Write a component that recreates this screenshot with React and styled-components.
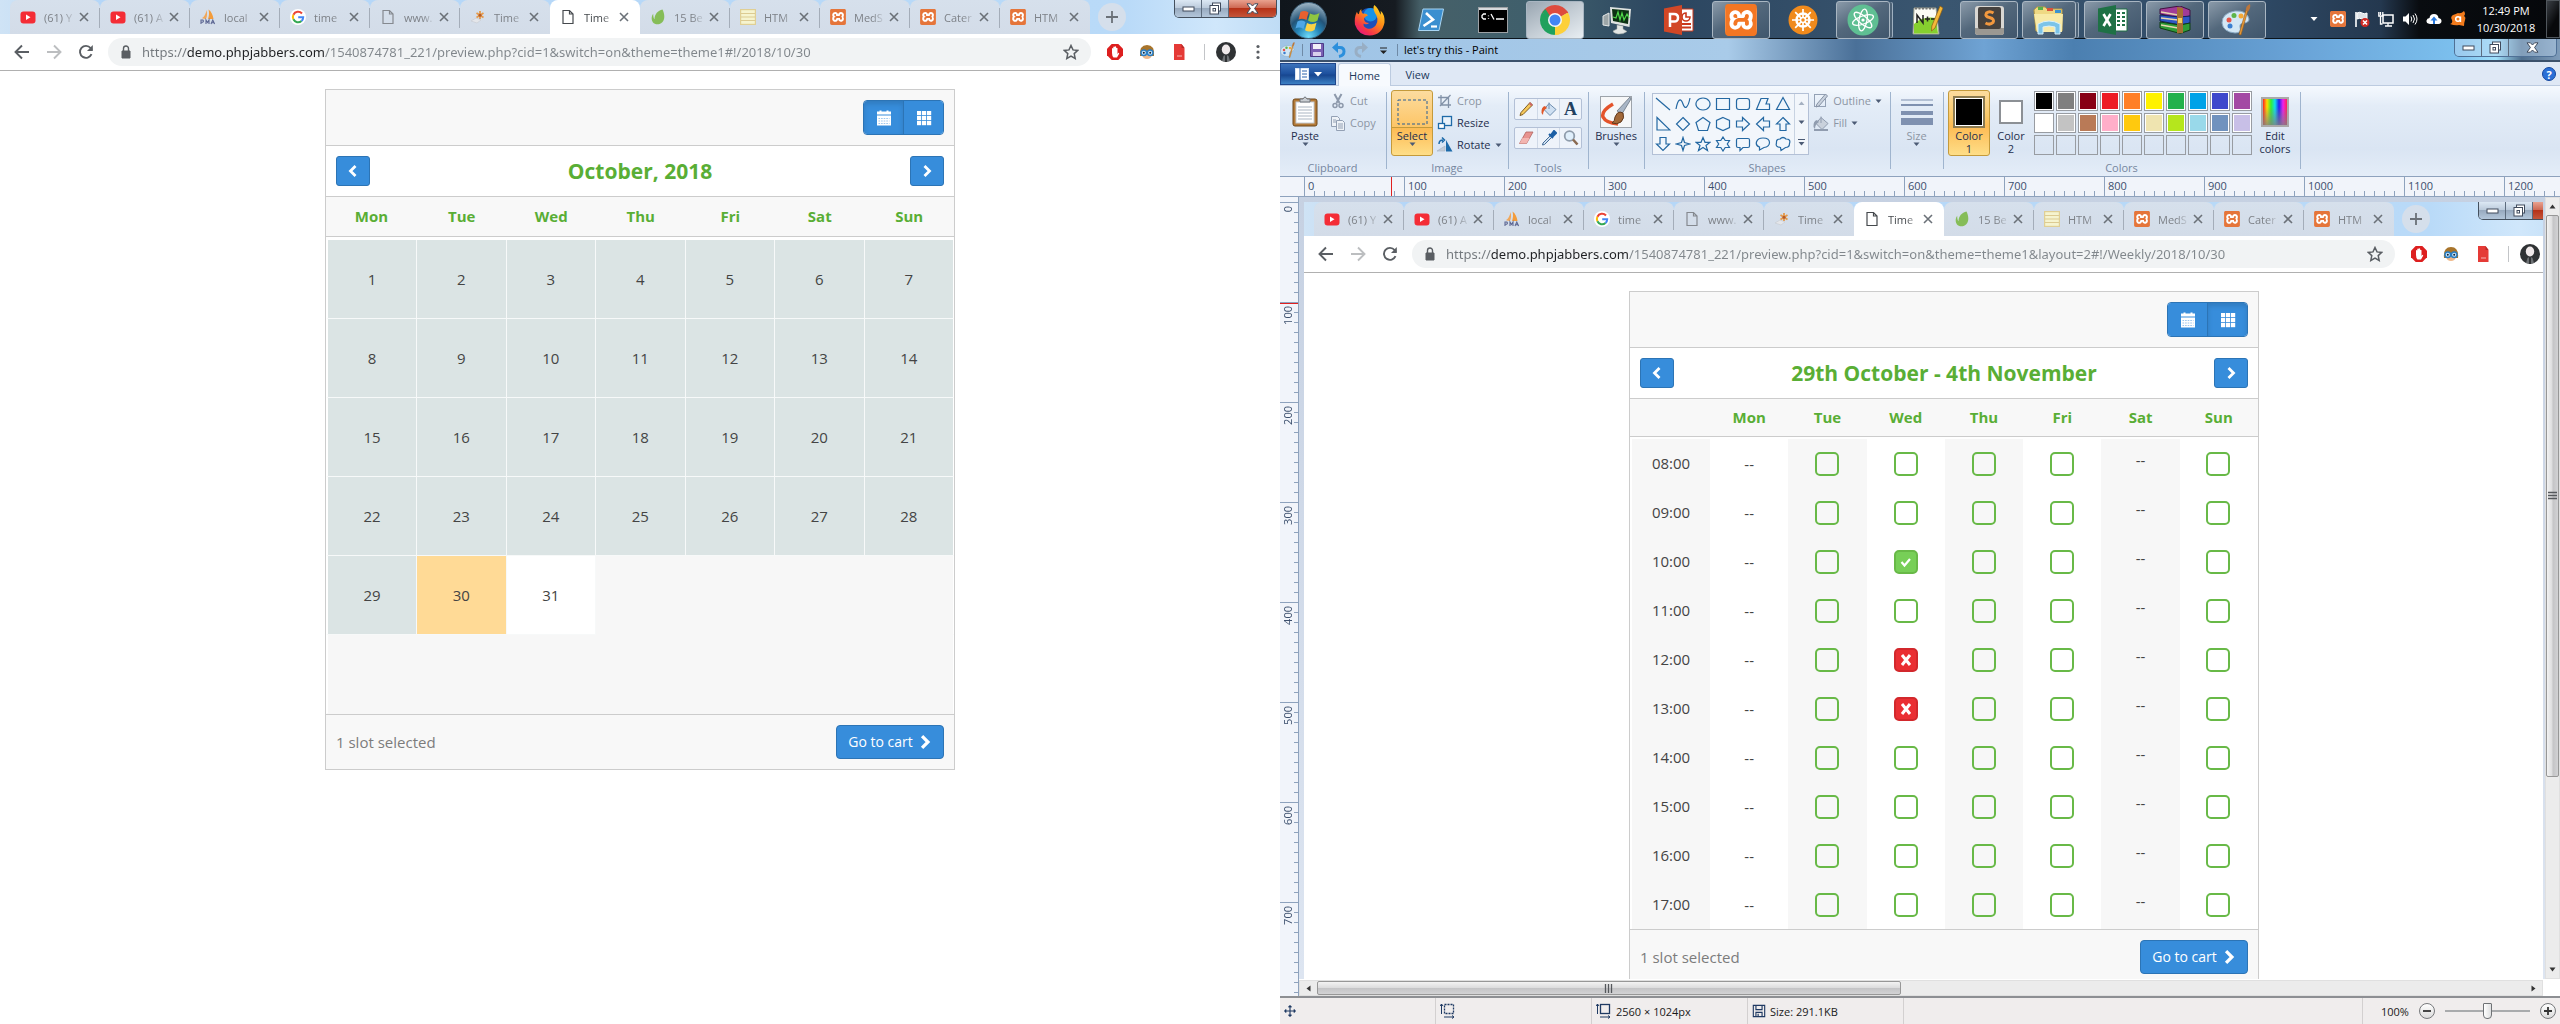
import React from 'react';
import styled, { createGlobalStyle, css } from 'styled-components';
import { SiXampp } from 'react-icons/si';

const Global = createGlobalStyle`
  *, *::before, *::after { box-sizing: border-box; }
  body { margin: 0; background: #fff; font-family: "Open Sans", "Noto Sans", sans-serif; font-size: 14px; color: #333; overflow: hidden; }
  button, input { font: inherit; color: inherit; margin: 0; }
  button { border: 0; padding: 0; background: none; cursor: pointer; }
  svg { display: block; flex: none; }
`;

const Desktop = styled.div`
  display: grid;
  grid-template-columns: minmax(0, 1fr) minmax(0, 1fr);
  height: 100vh;
`;

/* ---------- small shared pieces ---------- */

const Icon = ({ s = 16, w, h, vb = '0 0 16 16', children, ...rest }) => (
  <svg width={w || s} height={h || s} viewBox={vb} fill="none" aria-hidden="true" {...rest}>{children}</svg>
);

const Xampp = ({ s = 16 }) => (
  <XamppTile $s={s}><SiXampp size={s} /></XamppTile>
);
const XamppTile = styled.span`
  display: flex; align-items: center; justify-content: center; flex: none;
  width: ${p => p.$s}px; height: ${p => p.$s}px;
  background: #fff; border-radius: ${p => (p.$s > 20 ? 7 : 4)}px; color: ${p => (p.$s > 20 ? '#f37623' : '#e5753a')};
`;

/* ---------- browser ---------- */

const Browser = styled.section`
  width: 50vw; background: #fff; overflow: hidden;
`;
const TabStrip = styled.div`
  display: flex; height: 34px; padding-left: 10px;
  background: linear-gradient(90deg, #cfe3f5 0, #b4d6f8 8%, #b9daf8 88%, #d0e7fb 95%, #bfdcf5 100%);
`;
const Tab = styled.div`
  display: flex; align-items: center; width: 90px; height: 34px; padding: 0 6px 0 10px;
  border-radius: 8px 8px 0 0; font-size: 11px; color: #7d8187;
  background: ${p => (p.$active ? '#fff' : 'linear-gradient(#d6e0ec, #d3dce8)')};
  ${p => p.$active && css`color: #45494d;`}
  ${p => p.$line && css`
    background: linear-gradient(#a4adb9, #a4adb9) right 8px / 1px 20px no-repeat, linear-gradient(#d6e0ec, #d3dce8);
  `}
`;
const TabTitle = styled.span`
  width: 30px; margin: 0 2px 0 8px; white-space: nowrap;
  -webkit-mask-image: linear-gradient(90deg, #000 60%, rgba(0,0,0,.15));
  mask-image: linear-gradient(90deg, #000 60%, rgba(0,0,0,.15));
`;
const CloseTab = styled.button`
  display: flex; align-items: center; justify-content: center; width: 16px; height: 16px; color: #6b7178;
`;
const NewTab = styled.button`
  display: flex; align-items: center; justify-content: center; width: 28px; height: 28px;
  margin: 3px 0 0 8px; border-radius: 50%; background: #d5dfeb; color: #6b7178;
`;
const WinButtons = styled.div`
  display: flex; align-self: flex-start; height: 18px; width: 103px; margin-left: auto; margin-right: 3px;
  border: 1px solid ${p => (p.$dim ? '#4f7096' : '#44505e')}; border-top: 0; border-radius: 0 0 5px 5px; overflow: hidden;
  flex: none;
`;
const WinButton = styled.button`
  display: flex; align-items: center; justify-content: center; flex: ${p => (p.$close ? '1' : '0 0 27px')};
  border-right: ${p => (p.$close ? '0' : '1px solid #5d6c7e')};
  background: ${p => p.$dim ? 'rgba(190,215,240,.45)'
    : p.$close ? 'linear-gradient(#e9a28f, #cf6a55 45%, #b63218 50%, #c4553a)'
    : 'linear-gradient(#dce8f4, #bccbdc 45%, #98aabf 50%, #b3c6da)'};
`;

const NavBar = styled.div`
  display: flex; align-items: center; height: 37px; padding: 0 12px;
  border-bottom: 1px solid #b0b0b0; background: #fff;
`;
const NavButton = styled.button`
  display: flex; align-items: center; justify-content: center; width: 20px; height: 28px; margin-right: 12px;
  color: ${p => (p.$off ? '#bcbec0' : '#5a5e63')};
`;
const AddressBox = styled.label`
  display: flex; align-items: center; flex: 1; height: 28px; padding: 0 10px; border-radius: 14px; background: #f1f3f4;
`;
const AddressInput = styled.input`
  flex: 1; min-width: 0; height: 24px; margin-left: 8px; padding: 0; border: 0; outline: 0;
  font-family: "Noto Sans", "Open Sans", sans-serif; font-size: 13px; color: transparent;
  background: linear-gradient(90deg, #72777c 0 45px, #202124 45px 183px, #80868b 183px);
  -webkit-background-clip: text; background-clip: text;
`;
const Extensions = styled.div`
  display: flex; align-items: center; gap: 12px; padding-left: 14px;
`;
const ExtSeparator = styled.span`width: 1px; height: 16px; background: #c3c5c8; margin: 0 -1px 0 3px;`;
const ExtButton = styled.button`width: 20px; height: 20px; display: flex; align-items: center; justify-content: center; color: #5a5e63;`;

const PageIcon = ({ active }) => (
  <Icon><path d="M3 1.500h6.500l3.500 3.500v9.500H3z M9.500 1.500V5H13" stroke={active ? '#45494d' : '#85898f'} strokeWidth="1.200" /></Icon>
);
const YouTube = () => (
  <Icon><rect x="0.500" y="2.500" width="15" height="12" rx="3" fill="#f42d36" /><path d="M6 5.500v5.500l4.500-2.750z" fill="#fff" /></Icon>
);
const PmaIcon = () => (
  <Icon>
    <path d="M6 10C3.500 10 2 9 2 9c2.500-1 4-5 4.500-8 .8 3 .8 6-.5 9z" fill="#f0a75a" />
    <path d="M8 10c1-3 1.500-6 .5-9.500 3 2 4.500 6 5 9.500z" fill="#f39c3c" />
    <path d="M1 15v-4h1.800q1.200 1.200 0 2.200H1M6 15v-4l1.500 2.500L9 11v4M11 15l1.800-4 1.800 4M11.500 13.700h2.600" stroke="#5d6793" strokeWidth="1.100" />
  </Icon>
);
const GoogleIcon = () => (
  <Icon>
    <circle cx="8" cy="8" r="8" fill="#fff" />
    <path d="M12 4.500A5.200 5.200 0 0 0 3.400 5.700" stroke="#ea4335" strokeWidth="2" />
    <path d="M3.400 5.700a5.200 5.200 0 0 0 0 4.600" stroke="#fbbc05" strokeWidth="2" />
    <path d="M3.400 10.300A5.200 5.200 0 0 0 11.500 12" stroke="#34a853" strokeWidth="2" />
    <path d="M11.500 12A5.200 5.200 0 0 0 13.200 8.200H8.200" stroke="#4285f4" strokeWidth="2" />
  </Icon>
);
const BurstIcon = () => (
  <Icon>
    <path d="M1 12l5-3 5 2-4 3z" fill="#e4e6ea" stroke="#c6cad0" strokeWidth=".6" />
    <path d="M10 2v8M6.500 4l7 4.500M13.500 4l-7 4.500" stroke="#e59a4b" strokeWidth="1.800" />
    <circle cx="10" cy="6.200" r="1.500" fill="#b35a2c" />
  </Icon>
);
const LeafIcon = () => (
  <Icon><path d="M12.500 0.500c2 4 2.800 9.500 0 12.500-2.500 3-7.500 3-9.500.5C1 10.500 1.500 7 3.200 4.800c0 3 .5 4.500 1.300 5.500C4.500 5 8 1.500 12.500.5z" fill="#86bd58" /></Icon>
);
const NotesIcon = () => (
  <Icon><rect x=".5" y=".5" width="15" height="15" fill="#f6f4cf" stroke="#e0cf94" strokeWidth="1.400" /><path d="M1 4.500h14M1 8h14M1 11.500h14" stroke="#dccb92" strokeWidth="1.200" /></Icon>
);

const TABS = [
  ['(61) Y', YouTube], ['(61) A', YouTube], ['local', PmaIcon], ['time', GoogleIcon], ['www.', PageIcon],
  ['Time', BurstIcon], ['Time', PageIcon], ['15 Be', LeafIcon], ['HTM', NotesIcon],
  ['MedS', Xampp], ['Cater', Xampp], ['HTM', Xampp],
];
const ACTIVE_TAB = 6;

const MinGlyph = () => <Icon w="13" h="6" vb="0 0 13 6"><rect x="1" y="1" width="11" height="4" fill="#fff" stroke="#414b5c" /></Icon>;
const RestoreGlyph = () => (
  <Icon w="13" h="13" vb="0 0 13 13"><rect x="3.500" y="1" width="8" height="8" fill="#fff" stroke="#414b5c" /><rect x="1" y="3.500" width="8.500" height="8.500" fill="#fff" stroke="#414b5c" /><rect x="4" y="6.500" width="2.500" height="2.500" stroke="#414b5c" /></Icon>
);
const CloseGlyph = () => (
  <Icon w="13" h="11" vb="0 0 13 11"><path d="M1 .8h3.400L6.500 3 8.600.8H12L8.600 5.500 12 10.200H8.600L6.500 8l-2.100 2.200H1L4.400 5.500z" fill="#fff" stroke="#414b5c" /></Icon>
);
const WindowControls = ({ dim }) => (
  <WinButtons $dim={dim}>
    <WinButton $dim={dim} aria-label="Minimize"><MinGlyph /></WinButton>
    <WinButton $dim={dim} aria-label="Restore"><RestoreGlyph /></WinButton>
    <WinButton $dim={dim} $close aria-label="Close"><CloseGlyph /></WinButton>
  </WinButtons>
);

function BrowserWindow({ url, children }) {
  return (
    <Browser>
      <TabStrip>
        {TABS.map(([title, Fav], i) => (
          <Tab key={i} $active={i === ACTIVE_TAB} $line={i !== ACTIVE_TAB && i !== ACTIVE_TAB - 1 && i !== TABS.length - 1}>
            <Fav active={i === ACTIVE_TAB ? 1 : undefined} />
            <TabTitle>{title}</TabTitle>
            <CloseTab aria-label="Close tab"><Icon s={10} vb="0 0 10 10"><path d="M1 1l8 8M9 1L1 9" stroke="currentColor" strokeWidth="1.600" /></Icon></CloseTab>
          </Tab>
        ))}
        <NewTab aria-label="New tab"><Icon s={12} vb="0 0 12 12"><path d="M6 0v12M0 6h12" stroke="currentColor" strokeWidth="1.800" /></Icon></NewTab>
        <WindowControls />
      </TabStrip>
      <NavBar>
        <NavButton aria-label="Back"><Icon><path d="M15 8H2M8 1.500L1.500 8 8 14.500" stroke="currentColor" strokeWidth="1.900" /></Icon></NavButton>
        <NavButton $off aria-label="Forward"><Icon><path d="M1 8h13M8 1.500L14.500 8 8 14.500" stroke="currentColor" strokeWidth="1.900" /></Icon></NavButton>
        <NavButton aria-label="Reload"><Icon><path d="M13.500 10.200A6 6 0 1 1 12.600 4L14 5.800" stroke="currentColor" strokeWidth="1.900" /><path d="M14.800 1v6H9z" fill="currentColor" /></Icon></NavButton>
        <AddressBox>
          <Icon><path d="M4 7h8v7H4z" fill="#5a5e63" stroke="#5a5e63" /><path d="M5.500 7V4.500a2.500 2.500 0 0 1 5 0V7" stroke="#5a5e63" strokeWidth="1.400" /></Icon>
          <AddressInput aria-label="Address" defaultValue={url} />
          <ExtButton as="span"><Icon><path d="M8 1.500l2 4.400 4.800.5-3.600 3.200 1 4.800L8 12l-4.200 2.400 1-4.800L1.200 6.400 6 5.900z" stroke="#5a5e63" strokeWidth="1.500" /></Icon></ExtButton>
        </AddressBox>
        <Extensions>
          <ExtButton aria-label="Ad blocker">
            <Icon><path d="M4.700 0h6.600L16 4.700v6.600L11.300 16H4.700L0 11.300V4.700z" fill="#dd1f1f" /><path d="M5 9V4.500q.7-1 1.300 0V3q.7-1 1.400 0v-.5q.8-.8 1.400.2V4q.9-.8 1.400.2V10l1-1.200q1 .1.500 1.200L10 13.500H6.500Q5 12 5 9z" fill="#fff" /></Icon>
          </ExtButton>
          <ExtButton aria-label="Page helper">
            <Icon><path d="M1 12Q0 1 8 1t7 11z" fill="#a8742b" /><path d="M3 7h10v4q-1 4-5 4t-5-4z" fill="#f0b98a" /><circle cx="4.800" cy="8.800" r="2.800" fill="#cfe9fb" stroke="#2a7ec4" strokeWidth="1.500" /><circle cx="11.200" cy="8.800" r="2.800" fill="#cfe9fb" stroke="#2a7ec4" strokeWidth="1.500" /><circle cx="4.800" cy="8.800" r="1" fill="#123" /><circle cx="11.200" cy="8.800" r="1" fill="#123" /></Icon>
          </ExtButton>
          <ExtButton aria-label="PDF tool">
            <Icon><path d="M3 0h7.500L13.500 4v12H3z" fill="#e53a36" /><path d="M10.500 0v4h3z" fill="#b92b28" /><path d="M6 12h5" stroke="#f5b3b1" /></Icon>
          </ExtButton>
          <ExtSeparator />
          <ExtButton aria-label="Profile">
            <Icon s={20} vb="0 0 20 20"><circle cx="10" cy="10" r="10" fill="#2f3234" /><ellipse cx="10" cy="7.500" rx="4.200" ry="5" fill="#efe9ea" /><path d="M6 19l1.500-5L10 12.500 12.500 14l1.500 5-4 1z" fill="#6d7174" /><path d="M10 13v7" stroke="#1d1f20" strokeWidth="1.500" /></Icon>
          </ExtButton>
          <ExtButton aria-label="Menu"><Icon><circle cx="8" cy="2.500" r="1.600" fill="currentColor" /><circle cx="8" cy="8" r="1.600" fill="currentColor" /><circle cx="8" cy="13.500" r="1.600" fill="currentColor" /></Icon></ExtButton>
        </Extensions>
      </NavBar>
      {children}
    </Browser>
  );
}

/* ---------- booking calendar ---------- */

const Card = styled.main`
  width: 630px; max-width: 100%; margin: 18px auto 0; border: 1px solid #ccc; background: #f8f8f8;
`;
const CardTop = styled.div`
  display: flex; justify-content: flex-end; height: 56px; padding: 10px; border-bottom: 1px solid #ccc;
`;
const Segments = styled.div`
  display: flex; width: 81px; height: 35px; border: 1px solid #2c74b5; border-radius: 4px; overflow: hidden;
`;
const Segment = styled.button`
  display: flex; flex: 1; align-items: center; justify-content: center; background: #378ddb; color: #fff;
  & + & { border-left: 1px solid #2c74b5; }
  ${p => p.$on && css`box-shadow: inset 0 3px 5px rgba(0,0,0,.13);`}
`;
const TitleRow = styled.div`
  display: flex; align-items: center; justify-content: space-between; height: 51px; padding: 0 10px;
  border-bottom: 1px solid #ccc; background: #fff;
`;
const Title = styled.h1`margin: 0; font-size: 21px; line-height: 28px; font-weight: 700; color: #59ae35;`;
const BlueButton = styled.button`
  display: flex; align-items: center; justify-content: center; gap: 5px; width: ${p => p.$w}px; height: ${p => p.$h}px;
  border: 1px solid #2c74b5; border-radius: ${p => (p.$h > 30 ? 4 : 3)}px; background: #378ddb; color: #fff; font-size: 14px;
`;
const CalTable = styled.table`
  width: 100%; border-collapse: separate; border-spacing: 0; table-layout: fixed; background: #fff;
  th { height: ${p => p.$head}px; padding: 0 0 2px; border-bottom: 1px solid #ccc; background: #f8f8f8;
    color: #59ae35; font-size: 15px; line-height: 20px; font-weight: 700; }
  th:first-child { width: ${p => p.$first}px; }
  tbody::before { content: ''; display: block; height: ${p => p.$gap}px; }
`;
const edges = css`
  &:first-child { border-left: 2px solid #fff; }
  &:last-child { border-right: 1px solid #fff; }
`;
const DAY = { past: '#dbe4e4', cart: '#ffda96', open: '#fff', none: '#f7f7f7' };
const DayCell = styled.td`
  height: 79px; padding: 0; border-right: 1px solid #f7f9f9; border-bottom: 1px solid #f7f9f9;
  background: ${p => DAY[p.$kind]};
  ${p => p.$kind === 'none' && css`border-color: #f7f7f7;`}
  ${edges}
`;
const DayButton = styled.button`width: 100%; height: 78px; display: block; font-size: 15px; color: #444;`;
const SlotCell = styled.td`
  height: 49px; padding: 0; text-align: center; vertical-align: middle; line-height: 20px; font-size: 15px; color: #444;
  background: ${p => (p.$shade ? '#f7f7f7' : '#fff')};
  ${p => p.$raised && css`vertical-align: top; padding-top: 11px;`}
  ${edges}
  &:first-child { padding-bottom: 2px; }
`;
const mark = {
  cart: `url("data:image/svg+xml,%3Csvg xmlns='http://www.w3.org/2000/svg' viewBox='0 0 20 20'%3E%3Cpath d='M5.500 10l3 3.500 5.500-6.500' fill='none' stroke='white' stroke-width='2.200'/%3E%3C/svg%3E")`,
  booked: `url("data:image/svg+xml,%3Csvg xmlns='http://www.w3.org/2000/svg' viewBox='0 0 20 20'%3E%3Cpath d='M6 5l8 10M14 5l-8 10' fill='none' stroke='white' stroke-width='3'/%3E%3C/svg%3E")`,
};
const SlotBox = styled.input`
  appearance: none; display: block; width: 24px; height: 24px; margin: 1px auto 0; border: 2px solid #68b947; border-radius: 5px;
  ${p => p.$state === 'cart' && css`background: #77cf57 ${mark.cart};`}
  ${p => p.$state === 'booked' && css`background: #ea2f33 ${mark.booked}; border-color: #d2282c;`}
`;
const CardFoot = styled.footer`
  display: flex; align-items: center; justify-content: space-between; height: 55px; padding: 0 10px;
  border-top: 1px solid #ccc; color: #7c7c7c; font-size: 15px; line-height: 20px;
`;

const Chevron = ({ left, s = 12 }) => (
  <Icon s={s} vb="0 0 12 12"><path d={left ? 'M8.500 1L3.500 6l5 5' : 'M3.500 1l5 5-5 5'} stroke="currentColor" strokeWidth="2.800" /></Icon>
);
const CalendarGlyph = () => (
  <Icon><path d="M1 1.500h2.500V.5h2v1h5v-1h2v1H15V4.500H1z M1 5.500h14v10H1z" fill="#fff" /><path d="M2.500 8.500h11M2.500 11h11M2.500 13.500h11" stroke="#9cc6ee" strokeDasharray="1.600 1" /></Icon>
);
const GridGlyph = () => (
  <Icon>{[0, 1, 2].map(r => [0, 1, 2].map(c => <rect key={`${r}${c}`} x={1 + c * 5} y={1 + r * 5} width="4.200" height="4.200" fill="#fff" />))}</Icon>
);

const WEEK = ['Mon', 'Tue', 'Wed', 'Thu', 'Fri', 'Sat', 'Sun'];

function BookingCard({ title, view, children }) {
  return (
    <Card>
      <CardTop>
        <Segments>
          <Segment $on={view === 'month'} aria-label="Monthly view"><CalendarGlyph /></Segment>
          <Segment $on={view === 'week'} aria-label="Weekly view"><GridGlyph /></Segment>
        </Segments>
      </CardTop>
      <TitleRow>
        <BlueButton $w={34} $h={30} aria-label="Previous"><Chevron left /></BlueButton>
        <Title>{title}</Title>
        <BlueButton $w={34} $h={30} aria-label="Next"><Chevron /></BlueButton>
      </TitleRow>
      {children}
      <CardFoot>
        <span>1 slot selected</span>
        <BlueButton $w={108} $h={34}>Go to cart <Chevron s={14} /></BlueButton>
      </CardFoot>
    </Card>
  );
}

const dayKind = d => (d < 30 ? 'past' : d === 30 ? 'cart' : d === 31 ? 'open' : 'none');

const MonthTable = () => (
  <CalTable $head={40} $first={91} $gap={3}>
    <thead><tr>{WEEK.map(d => <th key={d} scope="col">{d}</th>)}</tr></thead>
    <tbody>
      {[0, 1, 2, 3, 4, 5].map(w => (
        <tr key={w}>
          {WEEK.map((name, i) => {
            const day = w * 7 + i + 1;
            return <DayCell key={name} $kind={dayKind(day)}>{day <= 31 && <DayButton>{day}</DayButton>}</DayCell>;
          })}
        </tr>
      ))}
    </tbody>
  </CalTable>
);

const HOURS = ['08:00', '09:00', '10:00', '11:00', '12:00', '13:00', '14:00', '15:00', '16:00', '17:00'];
const slotState = (day, hour) => {
  if (day !== 'Wed') return undefined;
  if (hour === '10:00') return 'cart';
  return hour === '12:00' || hour === '13:00' ? 'booked' : undefined;
};

const WeekTable = () => (
  <CalTable $head={38} $first={80} $gap={2}>
    <thead><tr><th aria-label="Time" />{WEEK.map(d => <th key={d} scope="col">{d}</th>)}</tr></thead>
    <tbody>
      {HOURS.map(h => (
        <tr key={h}>
          <SlotCell $shade>{h}</SlotCell>
          {WEEK.map((d, i) => {
            const closed = d === 'Mon' || d === 'Sat';
            const state = slotState(d, h);
            return (
              <SlotCell key={d} $shade={i % 2 === 1} $raised={d === 'Sat'}>
                {closed ? '--' : <SlotBox type="checkbox" aria-label={`${d} ${h}`} defaultChecked={state === 'cart'} disabled={state === 'booked'} $state={state} />}
              </SlotCell>
            );
          })}
        </tr>
      ))}
    </tbody>
  </CalTable>
);

/* ---------- taskbar ---------- */

const RightScreen = styled.div`display: flex; flex-direction: column; min-width: 0; height: 100vh; overflow: hidden;`;
const Taskbar = styled.nav`
  display: flex; flex: none; height: 39px; border-bottom: 1px solid #0b141c;
  background: linear-gradient(90deg, #10161c 0, #161b21 9%, #466068 11%, #3f5f6c 20%, #2c4660 30%, #3a5670 52%, #2f4a66 76%, #24384f 86%, #090c10 89%, #05070a 100%);
`;
const TaskButton = styled.button`
  display: flex; align-items: center; justify-content: center; flex: none; width: 58px; height: 38px; margin: 1px 2px 0; border-radius: 3px;
  &:first-child { width: 56px; margin-left: 0; }
  ${p => p.$open && css`
    border: 1px solid #a9b6c2;
    background: ${p.$lit ? 'linear-gradient(150deg, #99a6b1, #c3ccd4 50%, #e8eef2)' : 'linear-gradient(150deg, #8a9aa9, #53687c 45%, #40566c)'};
  `}
  ${p => p.$stack && css`width: 54px; margin-right: 6px; box-shadow: 3px 0 0 -1px #4d6276, 4px 0 0 -1px #9fb0c0;`}
`;
const Tray = styled.div`display: flex; align-items: center; gap: 8px; margin-left: auto; color: #fff;`;
const Clock = styled.time`width: 64px; text-align: center; color: #fff; font-size: 11px; line-height: 17px; white-space: pre-line;`;
const ShowDesktop = styled.button`width: 14px; height: 38px; border: 1px solid #50565c; background: linear-gradient(120deg, #3a3f45, #08090b 60%);`;

const StartOrb = () => (
  <Icon s={37} vb="0 0 37 37">
    <defs><radialGradient id="orb" cx=".5" cy=".95" r=".95"><stop offset="0" stopColor="#6fdcfa" /><stop offset=".35" stopColor="#2585b8" /><stop offset=".6" stopColor="#235478" /><stop offset="1" stopColor="#a3b9c8" /></radialGradient></defs>
    <circle cx="18.500" cy="18.500" r="18" fill="url(#orb)" stroke="#3d6079" />
    <path d="M10.500 10q4-2 8 .5l-2 7.500q-4-2-8-.5z" fill="#e9602f" /><path d="M20 11.500q4.500 2.500 9.500-.5l-2 7.500q-4.500 3-9.500 0z" fill="#8fc640" />
    <path d="M7.500 19.500q4-2 8 .5L13.500 27q-4-2.500-8-.5z" fill="#4fa7e6" /><path d="M17 21q5 2.500 9.500-.3l-2 7.300q-5 3-9.500.3z" fill="#fcd345" />
  </Icon>
);
const Firefox = () => (
  <Icon s={31} vb="0 0 32 32">
    <defs><linearGradient id="ff" x1=".9" y1="0" x2=".2" y2="1"><stop offset="0" stopColor="#ffe226" /><stop offset=".45" stopColor="#ff8a16" /><stop offset=".8" stopColor="#f5334b" /><stop offset="1" stopColor="#e31587" /></linearGradient></defs>
    <circle cx="16" cy="15" r="12" fill="#1f4fb8" /><circle cx="17" cy="10" r="7" fill="#1a93e8" />
    <path d="M3 7q-3 6-2 13Q4.500 31 16 31.500 29 31 31.500 18q.5-8-4-12 .5 2-.2 4Q25 3 21 0q-2 3 .5 8 5 7 1 13-4 5-9.500 3-4-2-3-5 3 2 5.500-.5-4 0-5-3-.5-2 1-3l3-2q-2-2-5-1.500Q7.500 8 7.500 4 5 6 5 9.500 3.500 9.500 3 7z" fill="url(#ff)" />
  </Icon>
);
const PowerShell = () => (
  <Icon w="28" h="24" vb="0 0 28 24"><path d="M6 1h20.500L22 22.500H1.500z" fill="#3b8fd0" stroke="#a9d5f2" /><path d="M9 5l7 6.500L6.500 18" stroke="#fff" strokeWidth="2.600" /><path d="M14 18.500h6" stroke="#fff" strokeWidth="2.200" /></Icon>
);
const Terminal = () => (
  <Icon w="30" h="26" vb="0 0 30 26"><rect x=".5" y=".5" width="29" height="25" fill="#000" stroke="#9da1a5" /><path d="M1 2h28" stroke="#d7dadd" strokeWidth="2" /><path d="M8 7H5.500L4 8.500v2L5.500 12H8M10.500 8.500v.8M10.500 11v.8M13 7l3 5.500M18 12h8" stroke="#fff" strokeWidth="1.300" /></Icon>
);
const ChromeLogo = () => (
  <Icon s={30} vb="0 0 30 30">
    <path d="M15 15L2.010 7.500A15 15 0 0 1 27.990 7.500z" fill="#dd4b3e" /><path d="M15 15L27.990 7.500A15 15 0 0 1 15 30z" fill="#fdd039" /><path d="M15 15v15A15 15 0 0 1 2.010 7.500z" fill="#1fa15d" />
    <path d="M15 8h13.200q-.8-2-1.700-2.500L15 5z" fill="#dd4b3e" /><path d="M9 18.500L2.400 7l3-3L10 11z" fill="#1fa15d" /><path d="M21 18.500L14.500 30l4-.5L24 20z" fill="#fdd039" />
    <circle cx="15" cy="15" r="7" fill="#f4f6f8" /><circle cx="15" cy="15" r="5.500" fill="#4285f4" />
  </Icon>
);
const Monitor = () => (
  <Icon s={30} vb="0 0 30 30"><path d="M1 11l6-3v13l-6-1z" fill="#9da6a8" stroke="#e5e8e8" /><path d="M8 2l21 2-1.500 18L9 18z" fill="#dfe3e1" /><path d="M10 4l17 1.500-1 13.500L11 16z" fill="#0c3113" /><path d="M11 12l3 1 2-6 2 8 2-7 2 7 3-6 2 4" stroke="#4fd64b" strokeWidth="1.200" /><path d="M15 20l6 1v3l4 2.500q-4 3-9 2.500-5-1-5-3l4-2z" fill="#e3e6e4" stroke="#a0a6a3" strokeWidth=".5" /></Icon>
);
const PowerPoint = () => (
  <Icon s={30} vb="0 0 30 30"><path d="M16 4h13v22H16z" fill="#fff" stroke="#c9391d" /><path d="M22 8a4 4 0 1 0 4 4h-4z" stroke="#c9391d" strokeWidth="1.600" /><path d="M18 19h9M18 22.500h9" stroke="#c9391d" strokeWidth="2" /><path d="M0 3.500L18 0v30L0 26.500z" fill="#d24726" /><path d="M6 22V9h4q4 0 4 3.800T10 16.500H7" stroke="#fff" strokeWidth="2.500" /></Icon>
);
const Wheel = () => (
  <Icon s={30} vb="0 0 30 30"><circle cx="15" cy="15" r="14.500" fill="#f08a1c" /><circle cx="15" cy="15" r="6.500" stroke="#fff" strokeWidth="2.500" /><path d="M15 4v22M4 15h22M7.200 7.200l15.600 15.600M22.800 7.200L7.200 22.800" stroke="#fff" strokeWidth="1.700" /><circle cx="15" cy="15" r="2.500" fill="#f08a1c" stroke="#fff" strokeWidth="1.500" /></Icon>
);
const Atom = () => (
  <Icon s={32} vb="0 0 32 32"><circle cx="16" cy="16" r="15.500" fill="#5fbf93" /><g stroke="#fff" strokeWidth="1.300"><ellipse cx="16" cy="16" rx="4" ry="11" transform="rotate(10 16 16)" /><ellipse cx="16" cy="16" rx="4" ry="11" transform="rotate(70 16 16)" /><ellipse cx="16" cy="16" rx="4" ry="11" transform="rotate(130 16 16)" /></g><circle cx="16" cy="16" r="1.600" fill="#fff" /></Icon>
);
const Notepad = () => (
  <Icon s={31} vb="0 0 31 31"><path d="M2 3h22l3 26H1z" fill="#fbfbf4" stroke="#989c8c" /><path d="M2 19q8-8 22-6l2 15.500H2z" fill="#86cf2f" /><path d="M3 3.500h21" stroke="#777" strokeDasharray="2 1.500" strokeWidth="2" /><path d="M5 18V10l6 8V10M13 14h5M15.500 11.500v5M19 14h5" stroke="#222" strokeWidth="1.500" /><path d="M28 1l3 2-8 20-3.500 3 .3-5z" fill="#f5b83a" stroke="#8d5c13" strokeWidth=".7" /></Icon>
);
const Sublime = () => (
  <Icon s={31} vb="0 0 31 31"><rect x="1" y="1" width="29" height="29" rx="3" fill="#d9d7d3" /><path d="M1 23h29v4q0 3-3 3H4q-3 0-3-3z" fill="#9b9892" /><rect x="4" y="2" width="23" height="22" rx="2" fill="#46423f" /><path d="M19.500 8q-4-2.500-7 0-2 3.500 3 4.500 5.500 1.500 3.500 5-3 3-7.500.5" stroke="#f3983e" strokeWidth="3" /></Icon>
);
const Explorer = () => (
  <Icon s={32} vb="0 0 32 32"><path d="M1 6l3-3h8l2 2h15v22H3z" fill="#efd984" stroke="#b99c44" /><path d="M5 3h5v3H5z" fill="#59b04a" /><path d="M14 4h6v3h-6z" fill="#d8523b" /><path d="M22 6h6v3h-6z" fill="#3c93d1" /><path d="M1 10h29l-1 18H4z" fill="#f8eaa7" /><path d="M5 30V20q11-6 22 0v10h-5v-7q-6-2-12 0v7z" fill="#7cc4e8" stroke="#d8f0fb" /></Icon>
);
const Excel = () => (
  <Icon s={30} vb="0 0 30 30"><path d="M15 4h14v22H15z" fill="#fff" stroke="#1e7145" /><path d="M19 8h3M24 8h3M19 12h3M24 12h3M19 16h3M24 16h3M19 20h3M24 20h3" stroke="#1e7145" strokeWidth="2" /><path d="M0 3.500L18 0v30L0 26.500z" fill="#1e7145" /><path d="M5.500 9l7 12M12.500 9l-7 12" stroke="#fff" strokeWidth="2.600" /></Icon>
);
const WinRar = () => (
  <Icon w="32" h="28" vb="0 0 32 28"><path d="M1 3l20-3 10 4v6l-10 2-20-4z" fill="#a13c97" stroke="#3f1440" /><path d="M1 9l20 2 10-1v7l-10 2L1 15z" fill="#2d57c5" stroke="#142357" /><path d="M1 16l20 3 10-2v7l-10 3.500L1 22z" fill="#2f9c37" stroke="#0f3d14" /><path d="M2 6l17 3M2 12l17 2M2 19l17 3" stroke="#e6d6b0" strokeWidth="1.500" /><path d="M18 1l6 1v25l-6 .5z" fill="#a46f34" /><path d="M19 12h4v5h-4z" fill="#f2cf5b" /></Icon>
);
const PaintIcon = ({ s = 32 }) => (
  <Icon s={s} vb="0 0 32 32"><path d="M14 7Q26 6 28 15q0 4-6 4-4 1-3 4 2 6-5 6Q2 28 1 19 1 9 14 7z" fill="#d3e7f5" stroke="#88a8c2" /><circle cx="8" cy="16" r="2.500" fill="#e5564a" /><circle cx="13" cy="11.500" r="2.500" fill="#5db54a" /><circle cx="20" cy="12" r="2.500" fill="#f4a836" /><circle cx="9" cy="22" r="2.500" fill="#3a7fd0" /><path d="M27 6l-7 25-2-.5L25 6z" fill="#e79a3a" stroke="#9c5c16" strokeWidth=".6" /><path d="M25 7q-1-5 4-7 1 4-2 7.500z" fill="#b9763d" /></Icon>
);

const TASKS = [
  ['Start', StartOrb], ['Firefox', Firefox], ['PowerShell', PowerShell], ['Command Prompt', Terminal], ['Chrome', ChromeLogo, 'lit'],
  ['System monitor', Monitor], ['PowerPoint', PowerPoint], ['XAMPP', () => <Xampp s={32} />, 'open'], ['Helm', Wheel],
  ['Atom', Atom, 'stack'], ['Notepad++', Notepad], ['Sublime Text', Sublime, 'open'], ['Explorer', Explorer, 'stack'],
  ['Excel', Excel, 'open'], ['WinRAR', WinRar, 'open'], ['Paint', PaintIcon, 'open'],
];

const WindowsTaskbar = () => (
  <Taskbar>
    {TASKS.map(([name, Glyph, state]) => (
      <TaskButton key={name} aria-label={name} $open={!!state} $lit={state === 'lit'} $stack={state === 'stack'}><Glyph /></TaskButton>
    ))}
    <Tray>
      <Icon><path d="M4.500 6h7L8 10z" fill="#fff" /></Icon>
      <Xampp s={16} />
      <Icon><path d="M2 1v15" stroke="#fff" strokeWidth="1.600" /><path d="M3 2q3-1.500 5 0t5 0v6q-3 1.500-5 0T3 8z" fill="#dfe3e7" stroke="#fff" /><circle cx="11" cy="11.500" r="4.500" fill="#cf2a23" /><path d="M9 9.500l4 4M13 9.500l-4 4" stroke="#fff" strokeWidth="1.500" /></Icon>
      <Icon><rect x="5" y="4" width="10" height="8" stroke="#fff" strokeWidth="1.500" /><path d="M7 15h7M10 12v3M2.500 1v3M0.800 1v4h4V1M2.500 5v8h2" stroke="#fff" strokeWidth="1.300" /></Icon>
      <Icon><path d="M1 5.500h2.500L7 2v12l-3.500-3.500H1z" fill="#fff" /><path d="M9 5.500q1.500 2.500 0 5M11 4q3 4 0 8M13 2.500q4 5.500 0 11" stroke="#fff" /></Icon>
      <Icon><path d="M4 13Q0 12.500.5 9.500 1 7 3.500 7 4 3 8 3t4.500 4q3 .5 3 3t-3 3z" fill="#fff" /><path d="M8 5.500l3.500 4H9V13H7V9.500H4.500z" fill="#2878dd" /></Icon>
      <Icon><path d="M8 2q3 1 6-2 2 3 0 5 2 1 1 4t-1 6l-5-1q-4 1-9-1 3-1 2-4-2-3 1-5 3-1 5-2z" fill="#f27b1c" /><circle cx="8" cy="8" r="2.300" stroke="#fff" strokeWidth="1.500" /><path d="M10.500 5.500V11" stroke="#fff" strokeWidth="1.400" /></Icon>
      <Clock>{'12:49 PM\n10/30/2018'}</Clock>
      <ShowDesktop aria-label="Show desktop" />
    </Tray>
  </Taskbar>
);

/* ---------- paint window ---------- */

const PaintTitle = styled.header`
  display: flex; align-items: center; flex: none; height: 23px; padding-left: 0; border-bottom: 2px solid #3c516b; gap: 6px;
  color: #000; font-size: 11px;
  background: linear-gradient(90deg, #9fc4e6 0, #a9cbe9 35%, #4a7098 45%, #6fa3d4 55%, #4b7fb0 62%, #6aa4d8 80%, #7cc0ee 92%, #9fe0fb 95%, #4f6f8e 97%, #7f9cba 100%);
`;
const QuickButton = styled.button`width: 16px; height: 16px;`;
const TitleSep = styled.span`width: 1px; height: 12px; background: #6f8aa6;`;
const RibbonTabs = styled.div`display: flex; align-items: flex-end; flex: none; height: 24px; background: #dfe8f5; border-bottom: 1px solid #bccbe0; font-size: 11px; color: #22395c;`;
const FileButton = styled.button`
  display: flex; align-items: center; justify-content: center; gap: 5px; width: 56px; height: 22px; margin-right: 2px;
  border: 1px solid #1f478c; background: linear-gradient(#3d73bb, #1c4f9d 50%, #17468f 55%, #3c80c4);
`;
const RibbonTab = styled.button`
  width: 53px; height: 22px; border: 1px solid transparent; border-bottom: 0; border-radius: 3px 3px 0 0;
  ${p => p.$on && css`height: 23px; margin-bottom: -1px; background: #f7fafe; border-color: #bccbe0;`}
`;
const HelpButton = styled.button`
  width: 14px; height: 14px; margin: 0 4px 4px auto; border-radius: 50%; border: 1px solid #14469e; background: #2a6fd6; color: #fff; font-size: 11px; line-height: 11px; font-weight: 700;
`;
const Ribbon = styled.div`
  display: flex; flex: none; height: 91px; padding-top: 4px; overflow: hidden; border-bottom: 1px solid #8ea2bd;
  background: linear-gradient(#f5f9fe 0, #e3ecf7 22%, #dae5f3 70%, #e4edf8); font-size: 11px; line-height: 14px; color: #1e2e4d;
`;
const Group = styled.section`
  display: flex; flex-direction: column; flex: none; width: ${p => p.$w}px; padding-right: 2px;
  background: linear-gradient(#9fb4ce, #9fb4ce) right 2px / 1px 77px no-repeat;
`;
const GroupBody = styled.div`display: flex; align-items: flex-start; justify-content: ${p => p.$at || 'center'}; height: 70px; padding: 0 4px; gap: ${p => p.$gap || 0}px;`;
const GroupLabel = styled.h2`margin: 0; text-align: center; font-size: 11px; line-height: 16px; font-weight: 400; color: #76869f;`;
const BigButton = styled.button`
  display: flex; flex-direction: column; align-items: center; flex: none; width: 42px; height: 66px; padding-top: 3px; border: 1px solid transparent; border-radius: 3px;
  color: ${p => (p.$off ? '#8c95a3' : 'inherit')};
  ${p => p.$on && css`border-color: #c49a3b; background: linear-gradient(#fcdc9f, #fbc967 40%, #fdbb54 55%, #fede88);`}
  ${p => p.$split && css`background: linear-gradient(#fcdc9f, #fdc566 36px, #c49a3b 36px 37px, #fdbb54 37px, #fede88);`}
`;
const BigArt = styled.span`display: flex; align-items: center; justify-content: center; height: 35px;`;
const BigText = styled.span`line-height: 13px; white-space: pre-line;`;
const Stack = styled.div`display: flex; flex-direction: column;`;
const SmallButton = styled.button`display: flex; align-items: center; gap: 4px; height: 22px; white-space: nowrap; color: ${p => (p.$off ? '#8c95a3' : 'inherit')};`;
const ToolRows = styled.div`display: flex; flex-direction: column; gap: 7px; padding-top: 8px;`;
const ToolRow = styled.div`display: flex; border: 1px solid #b3c0d6; border-radius: 2px; background: #eef3fa;`;
const Tool = styled.button`display: flex; align-items: center; justify-content: center; width: 22px; height: 20px; & + & { border-left: 1px solid #cfd9e7; }`;
const ShapeBox = styled.div`display: flex; flex: none; width: 157px; height: 62px; margin-top: 3px; border: 1px solid #b3c0d6; background: #f2f6fb;`;
const ShapeGrid = styled.div`display: grid; grid-template-columns: repeat(7, 20px); grid-auto-rows: 20px; justify-items: center; align-items: center; width: 141px; flex: none;`;
const ShapeScroll = styled.div`display: flex; flex-direction: column; justify-content: space-around; align-items: center; flex: 1; border-left: 1px solid #c8d3e2;`;
const Swatch = styled.span`
  width: ${p => p.$s}px; height: ${p => p.$s}px; border: 2px solid ${p => (p.$s > 26 ? '#8b7a50' : '#8c9095')}; outline: 0;
  background: ${p => p.$c}; box-shadow: inset 0 0 0 1px #fff;
`;
const Palette = styled.div`display: grid; grid-template-columns: repeat(10, 20px); gap: 2px; padding-top: 1px; margin: 0 2px 0 2px;`;
const Chip = styled.button`height: 20px; border: 1px solid #989ca2; padding: 1px; background: ${p => p.$c || 'transparent'}; background-clip: content-box; box-shadow: ${p => (p.$c ? 'inset 0 0 0 1px #fff' : 'none')};`;
const Spectrum = styled.span`width: 28px; height: 30px; border: 2px solid #aaa9a9; background: linear-gradient(rgba(128,128,128,0) 30%, rgba(128,128,128,.8)), linear-gradient(90deg, #f22, #fd0, #3e3, #1de, #22e, #e2e, #f25);`;

const Caret = () => <Icon w="7" h="5" vb="0 0 7 5"><path d="M.5.500h6L3.500 4z" fill="#4c5b75" /></Icon>;

const Big = ({ art, label, caret = true, ...rest }) => (
  <BigButton {...rest}><BigArt>{art}</BigArt><BigText>{label}</BigText>{caret && <Caret />}</BigButton>
);

const PasteArt = () => (
  <Icon w="26" h="31" vb="0 0 26 31"><rect x="1" y="3" width="24" height="27" rx="2" fill="#b47b39" stroke="#6e4718" /><rect x="4" y="6" width="18" height="21" fill="#fff" stroke="#c5ccd4" /><path d="M6 11h14M6 14h14M6 17h14M6 20h14M6 23h14" stroke="#aab5c2" /><path d="M8 6V3h3q2-4 4 0h3v3z" fill="#c9cdd2" stroke="#6d737a" /></Icon>
);
const CutArt = () => <Icon><path d="M4.500 1l5 9M11.500 1l-5 9" stroke="#8d99ab" strokeWidth="2" /><circle cx="5" cy="12.500" r="2" stroke="#8d99ab" strokeWidth="1.500" /><circle cx="11" cy="12.500" r="2" stroke="#8d99ab" strokeWidth="1.500" /></Icon>;
const CopyArt = () => <Icon><path d="M1.500 1.500h6l2 2v8h-8z" fill="#eef2f7" stroke="#93a0b4" /><path d="M6.500 5.500h6l2 2v8h-8z" fill="#eef2f7" stroke="#93a0b4" /><path d="M8 9h5M8 11h5M8 13h5M3 5h3M3 7h3" stroke="#93a0b4" /></Icon>;
const CropArt = () => <Icon><path d="M4 2v10h10M1 4.500h10.500V15M3 13L13.500 2" stroke="#8292a8" strokeWidth="1.300" /></Icon>;
const ResizeArt = () => <Icon><rect x="5.500" y="1.500" width="9" height="9" fill="#e9f2fb" stroke="#1e6aa8" strokeWidth="1.300" /><rect x="1.500" y="8.500" width="6" height="5" fill="#fff" stroke="#1e6aa8" strokeWidth="1.300" /></Icon>;
const RotateArt = () => <Icon><path d="M0 14h8V9z" fill="#c3ccd8" stroke="#a5b2c2" strokeWidth=".6" /><path d="M9 14.500h6.500L9 3z" fill="#1d6aa9" /><path d="M2 7q0-4 4-4M5 .5L7.500 3 5 5.500" stroke="#1d6aa9" strokeWidth="1.500" /></Icon>;
const Pencil = () => <Icon><path d="M12 1.500l2.500 2.500L5 13.500 2 14.500l1-3z" fill="#f6c85a" stroke="#7e5c22" /><path d="M11.500 2l2.500 2.500" stroke="#c66" strokeWidth="2" /></Icon>;
const Bucket = ({ gray }) => <Icon><path d="M8 2.500l7 6-6 6-6-6z" fill={gray ? '#c9d1dc' : '#cfe0f2'} stroke={gray ? '#909caf' : '#6f8fb0'} /><path d="M8 8V1.500" stroke={gray ? '#909caf' : '#6f8fb0'} /><path d="M4 5Q0 6 .5 12l1.500 2Q2 9 6 7z" fill={gray ? '#909caf' : '#e0582a'} />{gray && <path d="M1 15h14" stroke="#909caf" strokeWidth="2" />}</Icon>;
const Eraser = () => <Icon><path d="M8 2h7L8.500 13.500h-7z" fill="#e8938f" stroke="#b06460" strokeWidth=".8" /><path d="M1.500 13.500L4.500 8h7l-3 5.500z" fill="#f3b5b0" /></Icon>;
const Dropper = () => <Icon><path d="M9 6l-7 7-.5 2 2-.5 7-7" fill="#cfe0f0" stroke="#446c98" /><path d="M8 4l4 4M10 5l3-4 2 2-3.500 3.500z" stroke="#1b5fa5" strokeWidth="2" fill="#1b5fa5" /></Icon>;
const Lens = () => <Icon><circle cx="6.500" cy="6" r="4.800" fill="#e0effb" stroke="#8f9cab" strokeWidth="1.800" /><path d="M10 9.500l4.500 5" stroke="#8a6a50" strokeWidth="2.600" /></Icon>;
const TextTool = styled.b`font: 700 18px/18px "Liberation Serif", serif; color: #22405f;`;
const BrushArt = () => (
  <Icon w="32" h="32" vb="0 0 32 32"><rect x=".5" y=".5" width="31" height="31" fill="#f6f7f8" stroke="#9da3aa" /><path d="M13 8Q1 15 3 21q3 6 15 7" stroke="#e4532a" strokeWidth="3.500" /><path d="M31 3L22 18l-5-3L30 1z" fill="#a9b6c6" stroke="#5d6976" strokeWidth=".7" /><path d="M23 17q2 5-2 9-4 3-9 1 3-2 3-6 2-5 5-5z" fill="#a26838" stroke="#60371a" /></Icon>
);
const OutlineArt = () => <Icon><rect x="1.500" y="1.500" width="11" height="12" stroke="#94a1b5" /><path d="M12.500 1l2 2L6 13l-3 1 1-3z" fill="#c9d2de" stroke="#8793a6" /></Icon>;
const SizeArt = () => <Icon w="32" h="26" vb="0 0 32 26"><path d="M0 1h32" stroke="#7f91b0" /><path d="M0 6h32" stroke="#7f91b0" strokeWidth="2" /><path d="M0 14h32" stroke="#7f91b0" strokeWidth="4" /><path d="M0 22.500h32" stroke="#7f91b0" strokeWidth="7" /></Icon>;

const SHAPES = [
  'M1 2l14 12', 'M1 13C3 2 6 2 8 8s5 4 7-6', 'M8 2a7 6 0 1 0 .01 0z', 'M1.500 2.500h13v11h-13z', 'M4 2.500h8q2.500 0 2.500 2.500v6q0 2.500-2.500 2.500H4q-2.500 0-2.500-2.500V5Q1.500 2.500 4 2.500z', 'M6 2.500h7L11 8h3.500v5.500h-13z', 'M8 1.500l6.500 12h-13z',
  'M2 1.500v12.500h13z', 'M8 1.500l6.500 6.500L8 14.500 1.500 8z', 'M8 1.500l7 5-2.500 8h-9L1 6.500z', 'M8 1.500l6.500 3v7l-6.500 3-6.500-3v-7z', 'M1.500 5h6V1.500L14.500 8l-7 6.500V11h-6z', 'M14.500 5h-6V1.500L1.500 8l7 6.500V11h6z', 'M8 1.500L14.500 8H11v6.500H5V8H1.500z',
  'M5 1.500h6V8h3.500L8 14.500 1.500 8H5z', 'M8 1.500l1.500 5L15 8 9.500 9.500 8 14.500 6.500 9.500 1 8l5.500-1.500z', 'M8 1.500l2 4.800h5l-4 3.200 1.500 5L8 11.500l-4.500 3 1.500-5-4-3.200h5z', 'M8 1l2.200 3.500h4.300L12.300 8l2.200 3.500h-4.300L8 15l-2.200-3.500H1.500L3.700 8 1.500 4.500h4.300z', 'M3 2.500h10q1.500 0 1.500 1.500v6q0 1.500-1.500 1.500H8l-3 3v-3H3Q1.500 11.500 1.500 10V4Q1.500 2.500 3 2.500z', 'M8 2c9 0 8 9 1 9.500L4.500 14V11C-1 9 1 2 8 2z', 'M5 3q3-3 6 0 5 0 3.500 4.500 0 4-4 4L6 14.500l-.5-3Q0 11 1.500 7 1 3 5 3z',
];

const COLORS = [
  '#000', '#7f7f7f', '#880015', '#ed1c24', '#ff7f27', '#fff200', '#22b14c', '#00a2e8', '#3f48cc', '#a349a4',
  '#fff', '#c3c3c3', '#b97a57', '#ffaec9', '#ffc90e', '#efe4b0', '#b5e61d', '#99d9ea', '#7092be', '#c8bfe7',
  ...Array(10).fill(null),
];

const PaintRibbon = () => (
  <Ribbon>
    <Group $w={107}>
      <GroupBody $at="flex-start" $gap={4}>
        <Big art={<PasteArt />} label="Paste" />
        <Stack><SmallButton $off><CutArt />Cut</SmallButton><SmallButton $off><CopyArt />Copy</SmallButton></Stack>
      </GroupBody>
      <GroupLabel>Clipboard</GroupLabel>
    </Group>
    <Group $w={122}>
      <GroupBody $at="flex-start" $gap={4}>
        <Big $on $split art={<Icon w="31" h="26" vb="0 0 31 26"><rect x="1" y="1" width="29" height="24" stroke="#2b5f95" strokeDasharray="3 2" /></Icon>} label="Select" />
        <Stack>
          <SmallButton $off><CropArt />Crop</SmallButton>
          <SmallButton><ResizeArt />Resize</SmallButton>
          <SmallButton><RotateArt />Rotate <Caret /></SmallButton>
        </Stack>
      </GroupBody>
      <GroupLabel>Image</GroupLabel>
    </Group>
    <Group $w={80}>
      <GroupBody>
        <ToolRows>
          <ToolRow><Tool aria-label="Pencil"><Pencil /></Tool><Tool aria-label="Fill"><Bucket /></Tool><Tool aria-label="Text"><TextTool>A</TextTool></Tool></ToolRow>
          <ToolRow><Tool aria-label="Eraser"><Eraser /></Tool><Tool aria-label="Color picker"><Dropper /></Tool><Tool aria-label="Magnifier"><Lens /></Tool></ToolRow>
        </ToolRows>
      </GroupBody>
      <GroupLabel>Tools</GroupLabel>
    </Group>
    <Group $w={56}><GroupBody><Big art={<BrushArt />} label="Brushes" /></GroupBody></Group>
    <Group $w={246}>
      <GroupBody $gap={4}>
        <ShapeBox>
          <ShapeGrid>{SHAPES.map((d, i) => <Icon key={i}><path d={d} stroke="#2468a2" fill={i < 2 ? 'none' : '#f0f6fc'} strokeWidth="1.200" /></Icon>)}</ShapeGrid>
          <ShapeScroll><Icon w="7" h="5" vb="0 0 7 5"><path d="M.5 4h6L3.500.5z" fill="#a5b1c2" /></Icon><Caret /><Icon w="7" h="8" vb="0 0 7 8"><path d="M0 .5h7" stroke="#4c5b75" /><path d="M.5 3h6L3.500 6.500z" fill="#4c5b75" /></Icon></ShapeScroll>
        </ShapeBox>
        <Stack>
          <SmallButton $off><OutlineArt />Outline <Caret /></SmallButton>
          <SmallButton $off><Bucket gray />Fill <Caret /></SmallButton>
        </Stack>
      </GroupBody>
      <GroupLabel>Shapes</GroupLabel>
    </Group>
    <Group $w={53}><GroupBody><Big $off art={<SizeArt />} label="Size" /></GroupBody></Group>
    <Group $w={357}>
      <GroupBody $at="flex-start">
        <Big $on caret={false} art={<Swatch $s={32} $c="#000" />} label={'Color\n1'} />
        <Big caret={false} art={<Swatch $s={24} $c="#fff" />} label={'Color\n2'} />
        <Palette>{COLORS.map((c, i) => <Chip key={i} $c={c} aria-label={`Colour ${i + 1}`} />)}</Palette>
        <Big caret={false} art={<Spectrum />} label={'Edit\ncolors'} />
      </GroupBody>
      <GroupLabel>Colors</GroupLabel>
    </Group>
  </Ribbon>
);

const TopRuler = styled.div`
  position: relative; display: flex; flex: none; height: 20px; padding-left: 24px; overflow: hidden;
  background: #f1f4fa; border-bottom: 1px solid #8ea2bd; color: #3c4f6d; font-size: 11px; line-height: 17px;
`;
const TopMark = styled.span`
  flex: none; width: 100px; padding-left: 3px; border-left: 1px solid #8ea2bd;
  background: repeating-linear-gradient(90deg, transparent 0 9px, #8ea2bd 9px 10px) bottom left / 99px 5px no-repeat;
`;
const TopCursor = styled.span`position: absolute; left: 111px; top: 0; width: 1px; height: 20px; background: #e02020;`;
const Workspace = styled.div`display: flex; flex: 1; min-height: 0;`;
const SideRuler = styled.div`
  position: relative; flex: none; width: 19px; padding-top: 5px; overflow: hidden; background: #f1f4fa; border-right: 1px solid #8ea2bd; color: #3c4f6d; font-size: 11px;
`;
const SideMark = styled.div`
  height: 100px; border-top: 1px solid #8ea2bd;
  background: repeating-linear-gradient(transparent 0 9px, #8ea2bd 9px 10px) top right / 4px 99px no-repeat;
`;
const SideNumber = styled.span`display: block; width: 15px; padding-bottom: 3px; line-height: 15px; writing-mode: vertical-rl; transform: rotate(180deg);`;
const SideCursor = styled.span`position: absolute; left: 0; top: 106px; width: 18px; height: 1px; background: #e02020;`;
const CanvasColumn = styled.div`display: flex; flex-direction: column; flex: 1; min-width: 0;`;
const CanvasRow = styled.div`display: flex; flex: 1; min-height: 0;`;
const Canvas = styled.div`flex: 1; min-width: 0; padding: 5px 2px 0 5px; background: linear-gradient(#c6d1e2, #dde5f1); display: flex;`;
const Picture = styled.div`flex: 1; min-width: 0; overflow: hidden; background: #fff;`;
const ScrollV = styled.div`display: flex; flex-direction: column; flex: none; width: 15px; background: #ececec; border: 1px solid #e0e0e0;`;
const ScrollH = styled.div`display: flex; flex: none; height: 16px; margin: 1px 17px 0 0; background: #ececec; border: 1px solid #e0e0e0;`;
const ScrollArrow = styled.button`display: flex; align-items: center; justify-content: center; flex: none; width: ${p => (p.$h ? 17 : 13)}px; height: ${p => (p.$h ? 14 : 17)}px;`;
const Thumb = styled.div`
  display: flex; align-items: center; justify-content: center; border: 1px solid #979797; border-radius: 2px;
  flex: 0 0 ${p => (p.$h ? '47%' : '72%')};
  background: linear-gradient(${p => (p.$h ? '180deg' : '90deg')}, #f3f3f3, #dcdcdd 48%, #c4c4c6 52%, #d2d2d4);
`;
const Spacer = styled.span`flex: 1;`;
const StatusBar = styled.footer`
  display: flex; flex: none; height: 28px; border-top: 2px solid #8d8f93; background: #f0eded; color: #1a1a1a; font-size: 11px;
`;
const StatusCell = styled.div`display: flex; align-items: center; gap: 4px; flex: none; width: 156px; padding-left: 4px; border-right: 1px solid #d3d0d0;`;
const Zoom = styled.div`display: flex; align-items: center; gap: 10px; margin-left: auto; width: 198px; padding: 0 4px 0 18px; border-left: 1px solid #d3d0d0;`;
const RoundButton = styled.button`display: flex; align-items: center; justify-content: center; flex: none; width: 16px; height: 16px; border: 1px solid #77797c; border-radius: 50%; background: linear-gradient(#fff, #dcdcdc);`;
const ZoomSlider = styled.input`
  appearance: none; flex: 1; min-width: 0; height: 18px; background: linear-gradient(#a9abad, #a9abad) center / 100% 2px no-repeat;
  &::-webkit-slider-thumb { appearance: none; width: 9px; height: 16px; border: 1px solid #6f7275; border-radius: 1px 1px 4px 4px; background: linear-gradient(90deg, #fff, #dfe0e1); }
`;

const ArrowGlyph = ({ turn }) => <Icon s={7} vb="0 0 7 7"><path d="M.5 5.500h6L3.500 1.500z" fill="#333" transform={`rotate(${turn} 3.500 3.500)`} /></Icon>;
const Grip = ({ h }) => <Icon s={9} vb="0 0 9 9"><path d={h ? 'M1.500 0v9M4.500 0v9M7.500 0v9' : 'M0 1.500h9M0 4.500h9M0 7.500h9'} stroke="#55585c" strokeWidth="1.300" /></Icon>;
const ExtentGlyph = ({ dashed }) => <Icon><rect x="4.500" y="1.500" width="9" height="9" stroke="#1f3a63" strokeWidth="1.300" strokeDasharray={dashed ? '2 1' : undefined} /><path d="M1.500 11V1M0 3l1.500-2L3 3M4 14h10M12 12.500l2 1.500-2 1.500" stroke="#1f3a63" /></Icon>;

const PaintWindow = ({ children }) => (
  <>
    <PaintTitle>
      <PaintIcon s={16} />
      <TitleSep />
      <QuickButton aria-label="Save"><Icon><path d="M1.500 1.500h13v13h-13z" fill="#7a5fb4" stroke="#4d3a86" /><path d="M4 2h8v5H4z" fill="#f1eef8" /><path d="M4 10h8v4H4z" fill="#d8cfec" /></Icon></QuickButton>
      <QuickButton aria-label="Undo"><Icon><path d="M5 5.500h4q4 0 4 4t-5 5" stroke="#2b8fdc" strokeWidth="3" /><path d="M7 0v11L1 5.500z" fill="#2b8fdc" /></Icon></QuickButton>
      <QuickButton aria-label="Redo"><Icon><path d="M11 5.500H7q-4 0-4 4t5 5" stroke="#98aec4" strokeWidth="3" /><path d="M9 0v11l6-5.500z" fill="#98aec4" /></Icon></QuickButton>
      <QuickButton aria-label="Customize"><Icon><path d="M5 6h7" stroke="#222" /><path d="M5 8.500h7L8.500 12z" fill="#222" /></Icon></QuickButton>
      <TitleSep />
      <span>let's try this - Paint</span>
      <WindowControls dim />
    </PaintTitle>
    <RibbonTabs>
      <FileButton aria-label="File menu">
        <Icon w="14" h="12" vb="0 0 14 12"><rect x=".5" y=".5" width="13" height="11" fill="#fff" stroke="#dbe6f5" /><path d="M5 0v12" stroke="#2b62ad" /><path d="M7 3h5M7 6h5M7 9h5" stroke="#2b62ad" /></Icon>
        <Icon w="8" h="5" vb="0 0 8 5"><path d="M0 0h8L4 4.500z" fill="#fff" /></Icon>
      </FileButton>
      <RibbonTab $on>Home</RibbonTab>
      <RibbonTab>View</RibbonTab>
      <HelpButton aria-label="Help">?</HelpButton>
    </RibbonTabs>
    <PaintRibbon />
    <TopRuler>
      {Array.from({ length: 13 }, (_, i) => <TopMark key={i}>{i * 100}</TopMark>)}
      <TopCursor />
    </TopRuler>
    <Workspace>
      <SideRuler>
        {Array.from({ length: 8 }, (_, i) => <SideMark key={i}><SideNumber>{i * 100}</SideNumber></SideMark>)}
        <SideCursor />
      </SideRuler>
      <CanvasColumn>
        <CanvasRow>
          <Canvas><Picture>{children}</Picture></Canvas>
          <ScrollV>
            <ScrollArrow aria-label="Scroll up"><ArrowGlyph turn={0} /></ScrollArrow>
            <Thumb><Grip /></Thumb>
            <Spacer />
            <ScrollArrow aria-label="Scroll down"><ArrowGlyph turn={180} /></ScrollArrow>
          </ScrollV>
        </CanvasRow>
        <ScrollH>
          <ScrollArrow $h aria-label="Scroll left"><ArrowGlyph turn={-90} /></ScrollArrow>
          <Thumb $h><Grip h /></Thumb>
          <Spacer />
          <ScrollArrow $h aria-label="Scroll right"><ArrowGlyph turn={90} /></ScrollArrow>
        </ScrollH>
      </CanvasColumn>
    </Workspace>
    <StatusBar>
      <StatusCell><Icon s={12} vb="0 0 16 16"><path d="M8 1v14M1 8h14M6 3l2-2 2 2M6 13l2 2 2-2M3 6L1 8l2 2M13 6l2 2-2 2" stroke="#1f3a63" strokeWidth="1.500" /></Icon></StatusCell>
      <StatusCell><ExtentGlyph dashed /></StatusCell>
      <StatusCell><ExtentGlyph />2560 × 1024px</StatusCell>
      <StatusCell><Icon s={14}><path d="M1.500 1.500h13v13h-13z M4.500 1.500v5h7v-5 M4.500 14.500v-5h7v5 M7 11v3" stroke="#1f3a63" strokeWidth="1.300" /></Icon>Size: 291.1KB</StatusCell>
      <Zoom>
        <span>100%</span>
        <RoundButton aria-label="Zoom out"><Icon s={8} vb="0 0 8 8"><path d="M0 4h8" stroke="#333" strokeWidth="1.800" /></Icon></RoundButton>
        <ZoomSlider type="range" aria-label="Zoom" defaultValue="50" />
        <RoundButton aria-label="Zoom in"><Icon s={8} vb="0 0 8 8"><path d="M0 4h8M4 0v8" stroke="#333" strokeWidth="1.800" /></Icon></RoundButton>
      </Zoom>
    </StatusBar>
  </>
);

export default function App() {
  return (
    <>
      <Global />
      <Desktop>
        <BrowserWindow url="https://demo.phpjabbers.com/1540874781_221/preview.php?cid=1&switch=on&theme=theme1#!/2018/10/30">
          <BookingCard title="October, 2018" view="month"><MonthTable /></BookingCard>
        </BrowserWindow>
        <RightScreen>
          <WindowsTaskbar />
          <PaintWindow>
            <BrowserWindow url="https://demo.phpjabbers.com/1540874781_221/preview.php?cid=1&switch=on&theme=theme1&layout=2#!/Weekly/2018/10/30">
              <BookingCard title="29th October - 4th November" view="week"><WeekTable /></BookingCard>
            </BrowserWindow>
          </PaintWindow>
        </RightScreen>
      </Desktop>
    </>
  );
}
